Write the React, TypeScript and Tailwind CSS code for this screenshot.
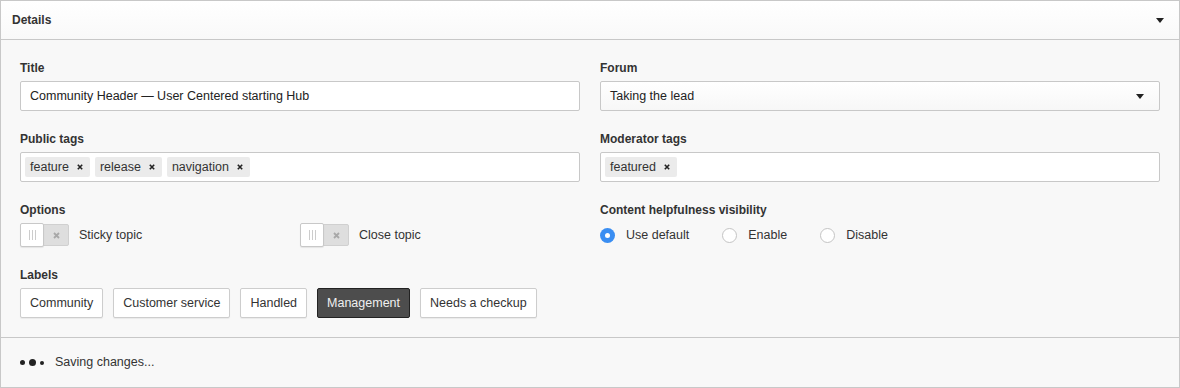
import React from "react";

const font = { fontFamily: '"Liberation Sans", Arial, sans-serif' };

function Label({ children }: { children: React.ReactNode }) {
  return <div className="text-[12px] leading-[14px] font-bold text-[#333] mb-[6px]">{children}</div>;
}

function Caret({ className }: { className?: string }) {
  return (
    <svg width="8" height="5" viewBox="0 0 8 5" className={className}>
      <path d="M0 0h8L4 5z" fill="#222" />
    </svg>
  );
}

function Chip({ text }: { text: string }) {
  return (
    <span className="inline-flex items-center h-[20px] pl-[5px] pr-[7px] bg-[#ebebeb] rounded-[2px] text-[12.5px] text-[#333] gap-[8px]">
      {text}
      <svg width="6" height="6" viewBox="0 0 6 6">
        <path d="M0.8 0.8L5.2 5.2M5.2 0.8L0.8 5.2" stroke="#222" strokeWidth="1.6" />
      </svg>
    </span>
  );
}

function Toggle({ label }: { label: string }) {
  return (
    <div className="flex items-center">
      <div className="flex items-center">
        <div className="relative z-10 w-[24px] h-[24px] bg-white border border-[#c8c8c8] rounded-[2px] shadow-[0_1px_1px_rgba(0,0,0,0.08)] flex items-center justify-center gap-[2px]">
          <span className="w-px h-[10px] bg-[#ccc]" />
          <span className="w-px h-[10px] bg-[#ccc]" />
          <span className="w-px h-[10px] bg-[#ccc]" />
        </div>
        <div className="-ml-px w-[26px] h-[22px] bg-[#dedede] border border-[#d0d0d0] rounded-r-[2px] flex items-center justify-center">
          <svg width="7" height="7" viewBox="0 0 7 7">
            <path d="M1 1L6 6M6 1L1 6" stroke="#a8a8a8" strokeWidth="1.8" />
          </svg>
        </div>
      </div>
      <span className="ml-[10px] text-[12.5px] text-[#333]">{label}</span>
    </div>
  );
}

function Radio({ label, checked }: { label: string; checked?: boolean }) {
  return (
    <div className="flex items-center mr-[33px]">
      {checked ? (
        <span className="w-[15px] h-[15px] rounded-full bg-[#3a8ef2] flex items-center justify-center">
          <span className="w-[5px] h-[5px] rounded-full bg-white" />
        </span>
      ) : (
        <span className="w-[15px] h-[15px] rounded-full bg-white border border-[#c4c4c4]" />
      )}
      <span className="ml-[11px] text-[12.5px] text-[#333]">{label}</span>
    </div>
  );
}

function LabelButton({ text, active }: { text: string; active?: boolean }) {
  return (
    <button
      className={
        active
          ? "h-[30px] px-[9px] text-[12.5px] rounded-[2px] bg-[#4d4d4d] border border-[#222] text-[#f0f0f0]"
          : "h-[30px] px-[9px] text-[12.5px] rounded-[2px] bg-white border border-[#cdcdcd] text-[#333] shadow-[0_1px_1px_rgba(0,0,0,0.06)]"
      }
    >
      {text}
    </button>
  );
}

export default function App() {
  return (
    <div style={font} className="w-[1180px] h-[388px] border border-[#c8c8c8] bg-[#f8f8f8] flex flex-col">
      <div className="h-[39px] shrink-0 flex items-center justify-between pl-[11px] pr-[15px] border-b border-[#c8c8c8] bg-gradient-to-b from-white to-[#f9f9f9]">
        <span className="text-[12px] font-bold text-[#333]">Details</span>
        <Caret />
      </div>

      <div className="px-[19px] pt-[21px] pb-[19px] border-b border-[#c8c8c8]">
        <div className="grid grid-cols-2 gap-x-[20px] gap-y-[21px]">
          <div>
            <Label>Title</Label>
            <div className="h-[30px] bg-white border border-[#c8c8c8] rounded-[2px] flex items-center px-[9px] text-[12.5px] text-[#222]">
              Community Header — User Centered starting Hub
            </div>
          </div>
          <div>
            <Label>Forum</Label>
            <div className="h-[30px] bg-gradient-to-b from-white to-[#f7f7f7] border border-[#c8c8c8] rounded-[2px] flex items-center justify-between pl-[9px] pr-[15px] text-[12.5px] text-[#222]">
              Taking the lead
              <Caret />
            </div>
          </div>

          <div>
            <Label>Public tags</Label>
            <div className="h-[30px] bg-white border border-[#c8c8c8] rounded-[2px] flex items-center px-[4px] gap-[5px]">
              <Chip text="feature" />
              <Chip text="release" />
              <Chip text="navigation" />
            </div>
          </div>
          <div>
            <Label>Moderator tags</Label>
            <div className="h-[30px] bg-white border border-[#c8c8c8] rounded-[2px] flex items-center px-[4px] gap-[5px]">
              <Chip text="featured" />
            </div>
          </div>

          <div>
            <Label>Options</Label>
            <div className="grid grid-cols-2 h-[24px]">
              <Toggle label="Sticky topic" />
              <Toggle label="Close topic" />
            </div>
          </div>
          <div>
            <Label>Content helpfulness visibility</Label>
            <div className="flex items-center h-[24px]">
              <Radio label="Use default" checked />
              <Radio label="Enable" />
              <Radio label="Disable" />
            </div>
          </div>

          <div className="col-span-2">
            <Label>Labels</Label>
            <div className="flex gap-[10px]">
              <LabelButton text="Community" />
              <LabelButton text="Customer service" />
              <LabelButton text="Handled" />
              <LabelButton text="Management" active />
              <LabelButton text="Needs a checkup" />
            </div>
          </div>
        </div>
      </div>

      <div className="flex-1 flex items-center pl-[19px]">
        <div className="flex items-center gap-[4px]">
          <span className="w-[5px] h-[5px] rounded-full bg-[#222]" />
          <span className="w-[7px] h-[7px] rounded-full bg-[#222]" />
          <span className="w-[4px] h-[4px] rounded-full bg-[#222]" />
        </div>
        <span className="ml-[11px] text-[12.5px] text-[#333]">Saving changes...</span>
      </div>
    </div>
  );
}
